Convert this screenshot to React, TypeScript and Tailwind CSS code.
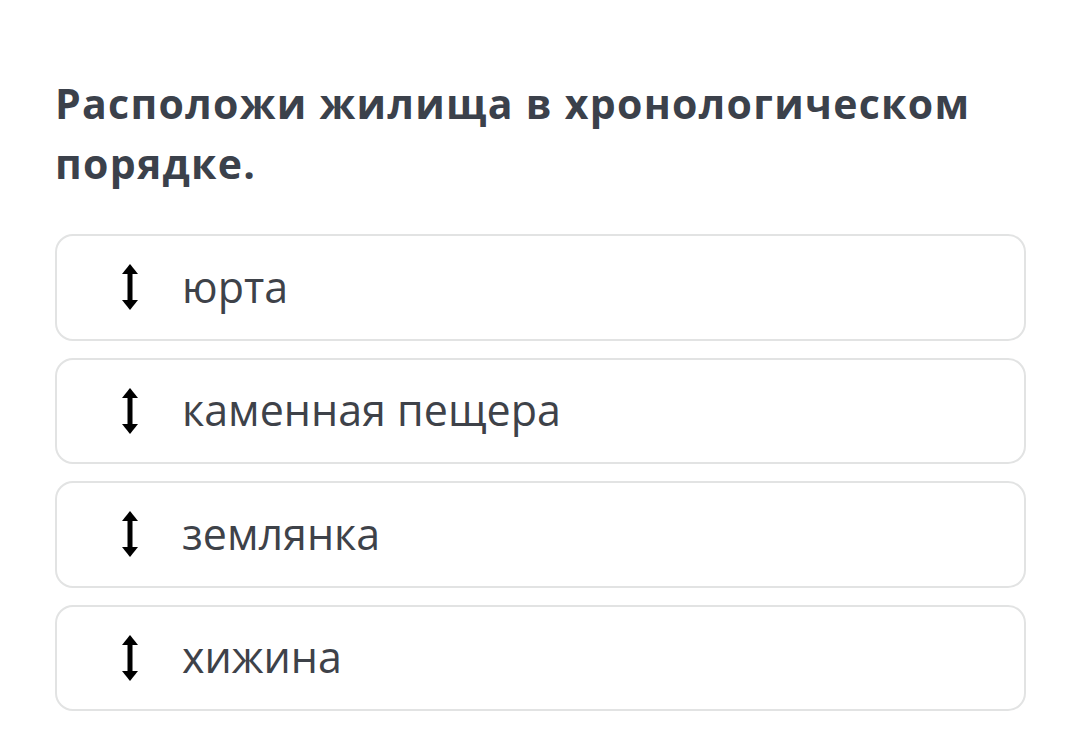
import React from "react";

const Arrow = () => (
  <svg width="18" height="46" viewBox="0 0 18 46" className="shrink-0">
    <polygon points="9,0 17,10 1,10" fill="#000" />
    <rect x="6.5" y="8" width="5" height="30" fill="#000" />
    <polygon points="9,46 17,36 1,36" fill="#000" />
  </svg>
);

const items = ["юрта", "каменная пещера", "землянка", "хижина"];

export default function App() {
  return (
    <div
      className="w-[1080px] h-[751px] bg-white overflow-hidden"
      style={{ fontFamily: '"Open Sans", "Noto Sans", sans-serif' }}
    >
      <div className="pl-[55px] pr-[40px] pt-[73px]">
        <h1 className="text-[41px] leading-[60px] font-bold text-[#3b414b] tracking-[1.3px]">
          Расположи жилища в хронологическом порядке.
        </h1>
        <div className="mt-[41px] flex flex-col gap-[17px]">
          {items.map((t) => (
            <div
              key={t}
              className="h-[106.5px] w-[971px] rounded-[18px] border-[2.5px] border-[#e2e3e3] flex items-center pl-[64px]"
            >
              <Arrow />
              <span className="ml-[43px] text-[43px] text-[#3e4249] leading-none -mt-[2px]">
                {t}
              </span>
            </div>
          ))}
        </div>
      </div>
    </div>
  );
}
